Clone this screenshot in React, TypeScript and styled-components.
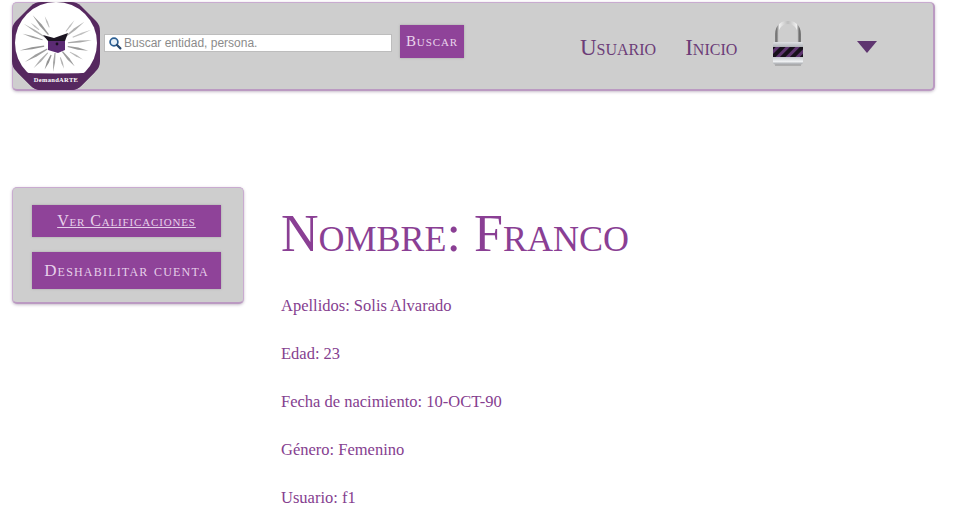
import React from "react";
import styled, { createGlobalStyle } from "styled-components";

const Global = createGlobalStyle`
  html, body { margin: 0; padding: 0; background: #fff; overflow: hidden; }
  body { font-family: "Liberation Serif", "Times New Roman", serif; }
`;
const Page = styled.div`
  width: 960px;
  height: 528px;
  padding: 2px 25px 0 12px;
  box-sizing: border-box;
  overflow: hidden;
`;
const Header = styled.header`
  height: 89px;
  box-sizing: border-box;
  display: flex;
  align-items: center;
  background: #cecece;
  border: 1px solid #c9abd0;
  border-bottom: 2px solid #bb9ac2;
  border-right: 2px solid #bb9ac2;
  border-radius: 5px;
  box-shadow: 0 1px 3px rgba(90, 60, 100, 0.35);
`;
const LogoBox = styled.div`
  width: 88px;
  height: 88px;
  flex: none;
  margin: -1px 0 -1px -1px;
`;
const SearchField = styled.label`
  width: 288px;
  height: 18px;
  margin: 0 0 7px 4px;
  box-sizing: border-box;
  background: #fff;
  border: 1px solid #bdbdbd;
  display: flex;
  align-items: center;
  gap: 2px;
  padding-left: 3px;
  svg { flex: none; }
`;
const SearchInput = styled.input`
  border: 0;
  outline: 0;
  padding: 0;
  width: 260px;
  background: transparent;
  font: 12px "Liberation Sans", Arial, sans-serif;
  color: #777;
  &::placeholder { color: #8b8b8b; opacity: 1; }
`;
const SearchButton = styled.button`
  width: 64px;
  height: 33px;
  margin: 0 0 10px 8px;
  border: 0;
  padding: 0;
  background: #8f4399;
  color: #e9d4ec;
  font: 400 15px "Liberation Serif", serif;
  font-variant: small-caps;
  letter-spacing: 0.9px;
  box-shadow: 0 0 2px rgba(120, 120, 120, 0.5);
`;
const Nav = styled.nav`
  margin-left: 116px;
  display: flex;
  align-items: center;
`;
const NavLink = styled.a<{ $gap: number }>`
  margin-right: ${(p) => p.$gap}px;
  margin-top: 3px;
  color: #6c3d78;
  font-size: 23px;
  font-variant: small-caps;
  line-height: 28px;
`;
const LockBox = styled.div`
  width: 32px;
  height: 46px;
  flex: none;
  margin-bottom: 4px;
`;
const Caret = styled.div`
  width: 0;
  height: 0;
  margin: 2px 0 0 53px;
  border-left: 10px solid transparent;
  border-right: 10px solid transparent;
  border-top: 12px solid #5f3570;
`;
const Main = styled.main`
  display: flex;
  align-items: flex-start;
  margin-top: 96px;
`;
const Sidebar = styled.aside`
  width: 232px;
  height: 117px;
  flex: none;
  box-sizing: border-box;
  background: #cecece;
  border: 1px solid #c9abd0;
  border-bottom: 2px solid #bb9ac2;
  border-radius: 5px;
  padding: 17px 22px 0 19px;
  display: flex;
  flex-direction: column;
  gap: 15px;
  box-shadow: 0 1px 3px rgba(90, 60, 100, 0.35);
`;
const SideButton = styled.a<{ $h: number; $under?: boolean; $size: number; $track: number }>`
  height: ${(p) => p.$h}px;
  display: flex;
  align-items: center;
  justify-content: center;
  background: #8f4399;
  color: #e6d0ea;
  font-size: ${(p) => p.$size}px;
  font-variant: small-caps;
  letter-spacing: ${(p) => p.$track}px;
  text-decoration: ${(p) => (p.$under ? "underline" : "none")};
  white-space: nowrap;
  box-shadow: 0 0 2px rgba(120, 120, 120, 0.5);
`;
const Content = styled.section`
  margin-left: 37px;
  color: #85408f;
`;
const Title = styled.h1`
  margin: 15px 0 29px;
  font-size: 52px;
  line-height: 64px;
  font-weight: 400;
  font-variant: small-caps;
  color: #8a3f94;
  white-space: nowrap;
`;
const Field = styled.p`
  margin: 0 0 27px;
  font-size: 16.5px;
  line-height: 21px;
  white-space: nowrap;
`;

// angle (deg, 0 = right, clockwise), inner radius, outer radius, half width, grey
const rays: [number, number, number, number, string][] = [
  [-163, 14, 35, 0.9, "#a2a2a2"], [-148, 12, 38, 1, "#b0b0b0"], [-129, 12, 37, 1.2, "#999999"],
  [-112, 18, 30, 0.8, "#bcbcbc"], [-52, 16, 30, 0.8, "#bdbdbd"],
  [-38, 12, 36, 1.1, "#b0b0b0"], [-22, 18, 38, 0.9, "#c0c0c0"], [-6, 12, 36, 1, "#a8a8a8"],
  [12, 12, 33, 1.1, "#9a9a9a"], [30, 16, 31, 0.8, "#b8b8b8"], [50, 10, 29, 1.2, "#9c9c9c"],
  [72, 14, 26, 0.8, "#b0b0b0"], [96, 9, 28, 1, "#a6a6a6"], [114, 12, 28, 1.1, "#949494"],
  [133, 12, 33, 1, "#aeaeae"], [150, 10, 36, 1.2, "#9e9e9e"], [170, 12, 37, 1.1, "#969696"],
  [-140, 22, 33, 0.8, "#c4c4c4"],
];
const rayPoints = ([a, r0, r1, w]: [number, number, number, number, string]) => {
  const t = (a * Math.PI) / 180;
  const c = Math.cos(t);
  const s = Math.sin(t);
  const cx = 44;
  const cy = 42;
  return [
    `${cx + c * r0 - s * w * 0.5},${cy + s * r0 + c * w * 0.5}`,
    `${cx + c * (r0 + r1) * 0.5 - s * w},${cy + s * (r0 + r1) * 0.5 + c * w}`,
    `${cx + c * r1},${cy + s * r1}`,
    `${cx + c * (r0 + r1) * 0.5 + s * w},${cy + s * (r0 + r1) * 0.5 - c * w}`,
    `${cx + c * r0 + s * w * 0.5},${cy + s * r0 - c * w * 0.5}`,
  ].join(" ");
};

const Logo = () => (
  <svg width="88" height="88" viewBox="0 0 88 88">
    <defs>
      <clipPath id="logoClip">
        <path d="M19 4 Q23 0 29 0 H59 Q65 0 69 4 L84 19 Q88 23 88 29 V59 Q88 65 84 69 L69 84 Q65 88 59 88 H29 Q23 88 19 84 L4 69 Q0 65 0 59 V29 Q0 23 4 19Z" />
      </clipPath>
    </defs>
    <g clipPath="url(#logoClip)">
      <rect width="88" height="88" fill="#56285f" />
      <circle cx="44" cy="41" r="41" fill="#fff" />
      <path d="M0 70 Q44 73 88 70 V88 H0Z" fill="#56285f" />
    </g>
    {rays.map((r, i) => (
      <polygon key={i} points={rayPoints(r)} fill={r[4]} />
    ))}
    <path d="M31 33 L42 36 L56 31 L53 39 L36 39Z" fill="#1c1522" />
    <polygon points="36,39 53,39 53,48 46,51 36,48" fill="#5b2a73" />
    <circle cx="45" cy="42" r="1.4" fill="#1a1020" />
    <text x="44" y="80" textAnchor="middle" fontFamily="Liberation Serif, serif" fontSize="6.5" fontWeight="700" fill="#fff" letterSpacing="0.3">DemandARTE</text>
  </svg>
);

const Lock = () => (
  <svg width="32" height="46" viewBox="0 0 32 46">
    <defs>
      <linearGradient id="shackle" x1="0" x2="1" y1="0" y2="0">
        <stop offset="0" stopColor="#777" />
        <stop offset="0.12" stopColor="#efefef" />
        <stop offset="0.5" stopColor="#bdbdbd" />
        <stop offset="0.88" stopColor="#efefef" />
        <stop offset="1" stopColor="#6f6f6f" />
      </linearGradient>
      <linearGradient id="body" x1="0" x2="0" y1="0" y2="1">
        <stop offset="0" stopColor="#e0e2e5" />
        <stop offset="1" stopColor="#a4a8ae" />
      </linearGradient>
      <linearGradient id="base" x1="0" x2="0" y1="0" y2="1">
        <stop offset="0" stopColor="#c4c7cc" />
        <stop offset="0.6" stopColor="#eef0f2" />
        <stop offset="1" stopColor="#9a9da2" />
      </linearGradient>
      <pattern id="stripes" width="7" height="7" patternUnits="userSpaceOnUse" patternTransform="rotate(45)">
        <rect width="7" height="7" fill="#17111b" />
        <rect width="3" height="7" fill="#5e3570" />
      </pattern>
    </defs>
    <path d="M4.8 22 V13 C4.8 -2.5 27.2 -2.5 27.2 13 V22" fill="none" stroke="url(#shackle)" strokeWidth="3.4" />
    <rect x="1" y="21" width="30" height="6" rx="1.5" fill="url(#body)" />
    <rect x="1" y="26" width="30" height="10" fill="url(#stripes)" />
    <path d="M1 36 H31 V41 Q31 43.5 28 43.5 H4 Q1 43.5 1 41Z" fill="url(#base)" />
    <rect x="3" y="43.5" width="26" height="1.5" fill="#8c8c8c" opacity="0.5" />
  </svg>
);

const Glass = () => (
  <svg width="14" height="14" viewBox="0 0 14 14">
    <circle cx="6" cy="6" r="3.9" fill="#e6f0f8" stroke="#2c5f93" strokeWidth="1.7" />
    <line x1="9" y1="9" x2="12.4" y2="12.4" stroke="#27486d" strokeWidth="2.2" strokeLinecap="round" />
  </svg>
);

export default function App() {
  return (
    <Page>
      <Global />
      <Header>
        <LogoBox><Logo /></LogoBox>
        <SearchField>
          <Glass />
          <SearchInput placeholder="Buscar entidad, persona." />
        </SearchField>
        <SearchButton>Buscar</SearchButton>
        <Nav>
          <NavLink $gap={29}>Usuario</NavLink>
          <NavLink $gap={35}>Inicio</NavLink>
          <LockBox><Lock /></LockBox>
          <Caret />
        </Nav>
      </Header>
      <Main>
        <Sidebar>
          <SideButton $h={32} $under $size={16} $track={0.85}>Ver Calificaciones</SideButton>
          <SideButton $h={37} $size={17} $track={1.2}>Deshabilitar cuenta</SideButton>
        </Sidebar>
        <Content>
          <Title>Nombre: Franco</Title>
          <Field>Apellidos: Solis Alvarado</Field>
          <Field>Edad: 23</Field>
          <Field>Fecha de nacimiento: 10-OCT-90</Field>
          <Field>Género: Femenino</Field>
          <Field>Usuario: f1</Field>
        </Content>
      </Main>
    </Page>
  );
}
